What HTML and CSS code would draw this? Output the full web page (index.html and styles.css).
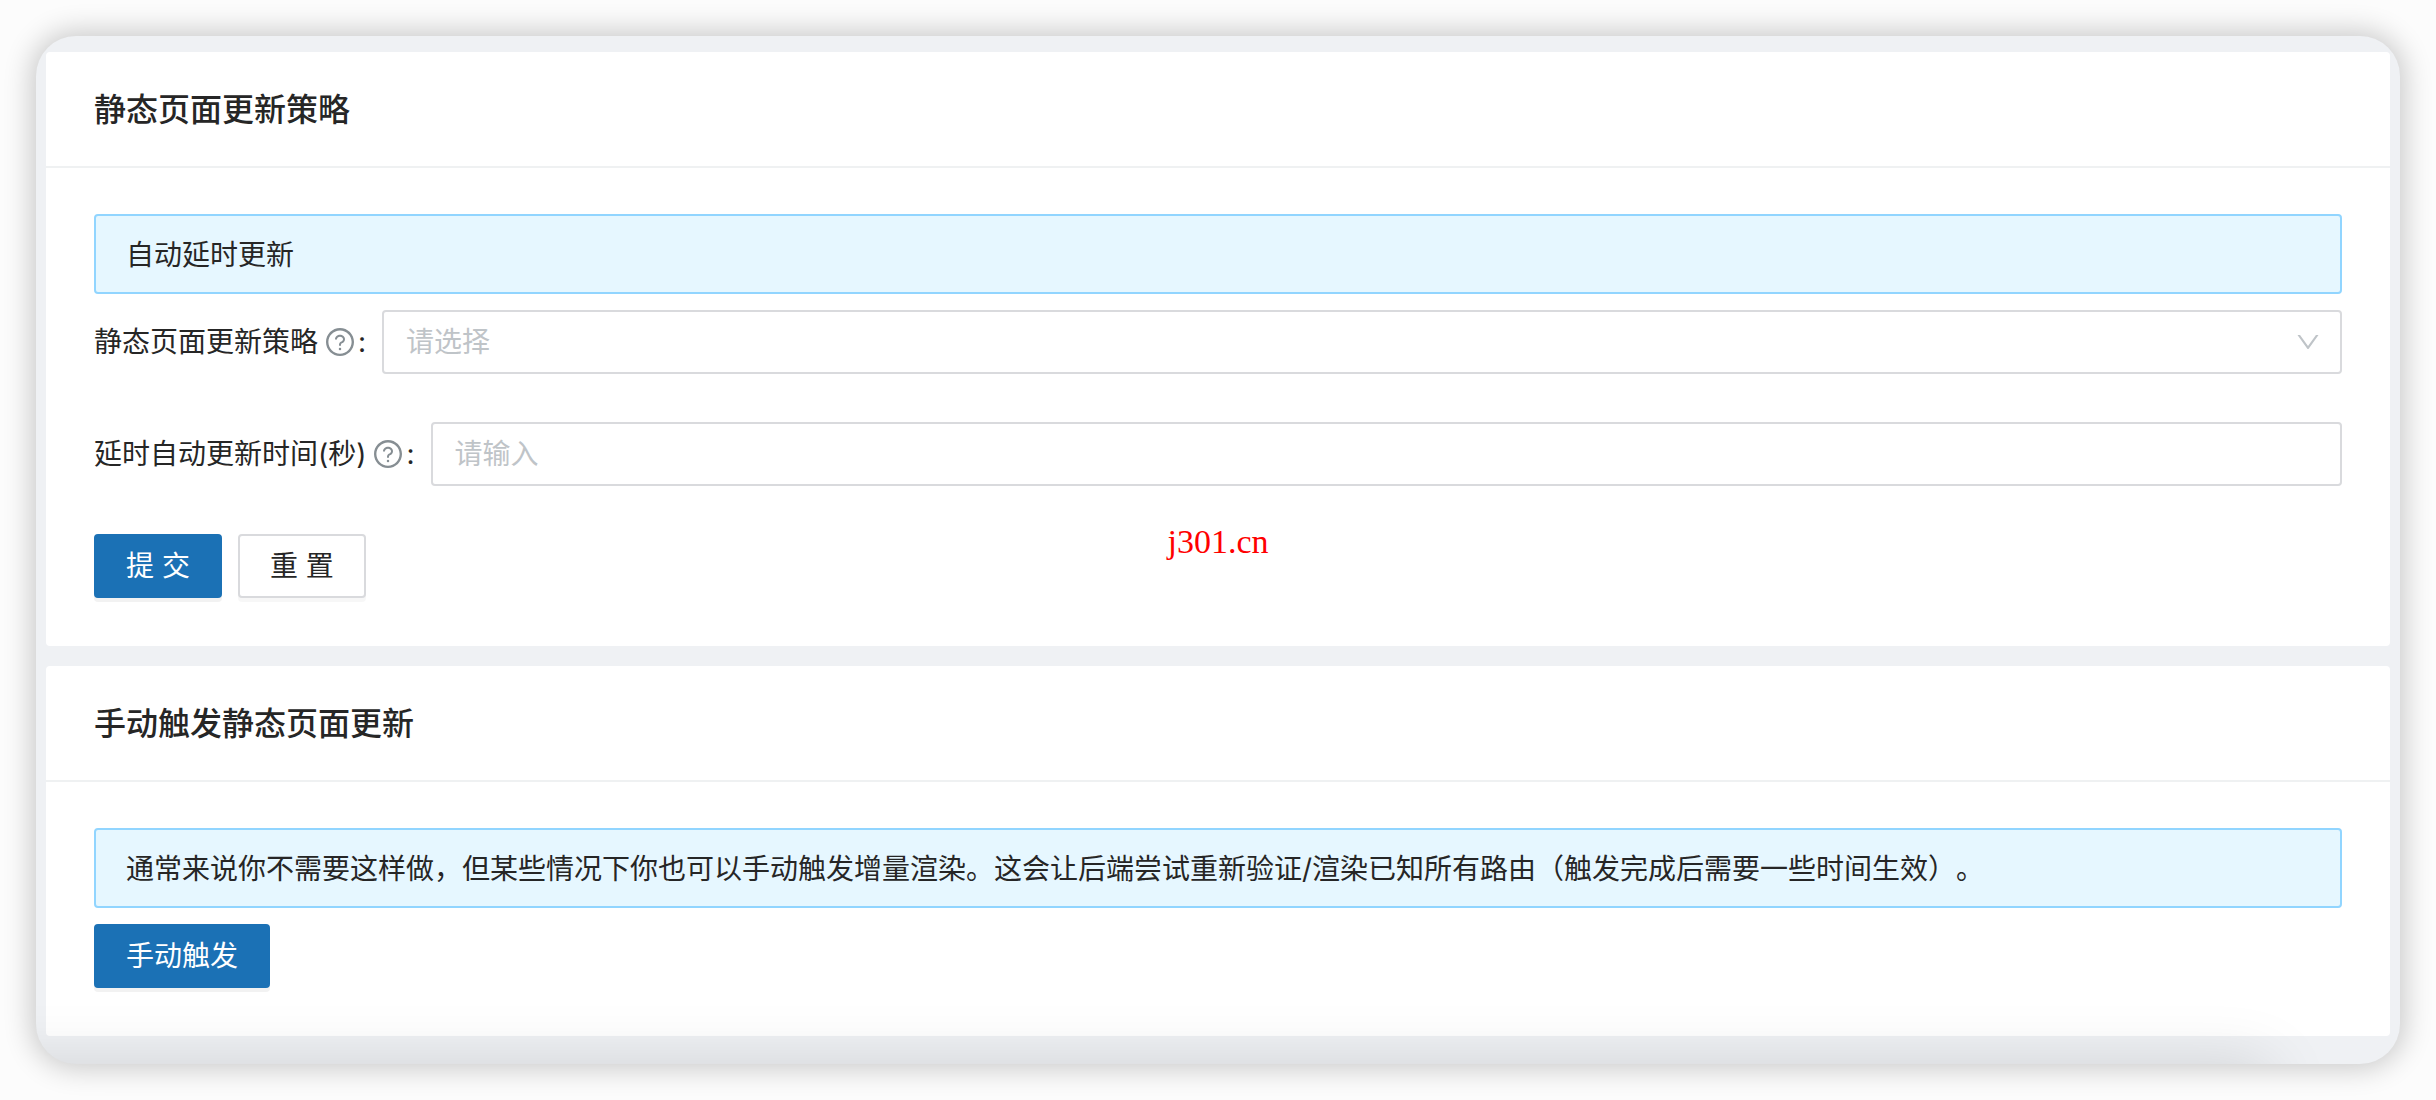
FILE: index.html
```html
<!DOCTYPE html>
<html lang="zh-CN">
<head>
<meta charset="utf-8">
<title>静态页面更新策略</title>
<link rel="stylesheet" href="styles.css">
</head>
<body>
<svg class="sprite" aria-hidden="true">
  <symbol id="icon-question" viewBox="0 0 1024 1024">
    <path d="M512 64C264.6 64 64 264.6 64 512s200.6 448 448 448 448-200.6 448-448S759.4 64 512 64zm0 820c-205.4 0-372-166.6-372-372s166.6-372 372-372 372 166.6 372 372-166.6 372-372 372z"/>
    <path d="M623.6 316.7C593.6 290.4 554 276 512 276s-81.6 14.5-111.6 40.7C369.2 344 352 380.7 352 420v7.6c0 4.4 3.6 8 8 8h48c4.4 0 8-3.6 8-8V420c0-44.1 43.1-80 96-80s96 35.9 96 80c0 31.1-22 59.6-56.1 72.7-21.2 8.1-39.2 22.3-52.1 40.9-13.1 19-19.9 41.8-19.9 64.9V620c0 4.4 3.6 8 8 8h48c4.4 0 8-3.6 8-8v-22.7a48.3 48.3 0 0130.9-44.8c59-22.7 97.1-74.7 97.1-132.5.1-39.3-17.1-76-48.3-103.3zM472 732a40 40 0 1080 0 40 40 0 10-80 0z"/>
  </symbol>
  <symbol id="icon-down" viewBox="0 0 1024 1024">
    <path d="M884 256h-75c-5.1 0-9.9 2.5-12.9 6.6L512 654.2 227.9 262.6c-3-4.1-7.8-6.6-12.9-6.6h-75c-6.5 0-10.3 7.4-6.5 12.7l352.6 486.1c12.8 17.6 39 17.6 51.7 0l352.6-486.1c3.9-5.3.1-12.7-6.4-12.7z"/>
  </symbol>
</svg>
<main class="window">
  <section class="card">
    <h2 class="card-head">静态页面更新策略</h2>
    <div class="card-body">
      <div class="alert">自动延时更新</div>
      <form class="form">
        <div class="form-item">
          <label class="form-label" for="strategy">静态页面更新策略<svg class="help"><use href="#icon-question"/></svg>:</label>
          <div class="select">
            <select class="control placeholder" id="strategy">
              <option value="">请选择</option>
            </select>
            <svg class="select-arrow" aria-hidden="true"><use href="#icon-down"/></svg>
          </div>
        </div>
        <div class="form-item">
          <label class="form-label" for="delay">延时自动更新时间(秒)<svg class="help"><use href="#icon-question"/></svg>:</label>
          <input class="control" id="delay" type="text" placeholder="请输入">
        </div>
        <div class="actions">
          <button class="btn btn-primary" type="button">提 交</button>
          <button class="btn" type="reset">重 置</button>
        </div>
      </form>
    </div>
  </section>
  <section class="card">
    <h2 class="card-head">手动触发静态页面更新</h2>
    <div class="card-body">
      <div class="alert">通常来说你不需要这样做，但某些情况下你也可以手动触发增量渲染。这会让后端尝试重新验证/渲染已知所有路由（触发完成后需要一些时间生效）。</div>
      <button class="btn btn-primary" type="button">手动触发</button>
    </div>
  </section>
</main>
<div class="watermark">j301.cn</div>
</body>
</html>
```

FILE: styles.css
```css
* {
  box-sizing: border-box;
}

body {
  position: relative;
  margin: 0;
  padding: 36px;
  min-height: 100vh;
  background: #fcfcfc;
  color: #262626;
  font-family: Inter, "Noto Sans CJK SC", sans-serif;
  font-size: 28px;
  line-height: 44px;
  text-spacing-trim: space-all;
}

.sprite {
  position: absolute;
  width: 0;
  height: 0;
}

.window {
  position: relative;
  display: flex;
  flex-direction: column;
  gap: 20px;
  padding: 16px 10px 28px;
  overflow: hidden;
  background: #eff1f4;
  border-radius: 40px;
  box-shadow: 0 0 28px 5px rgba(0, 0, 0, 0.2);
}

/* Soft shade rising from the bottom edge of the window */
.window::after {
  content: "";
  position: absolute;
  top: 100%;
  left: -80px;
  right: 130px;
  height: 80px;
  box-shadow: 0 0 64px rgba(0, 0, 0, 0.13);
  pointer-events: none;
}

.card {
  background: #fff;
  border-radius: 4px;
}

.card-head {
  margin: 0 0 -2px;
  padding: 32px 48px 30px;
  border-bottom: 2px solid #eff1f2;
  font-size: 32px;
  font-weight: 500;
  line-height: 52px;
}

.card-body {
  padding: 48px;
}

.alert {
  margin-bottom: 16px;
  padding: 16px 30px 14px;
  border: 2px solid #91d5ff;
  border-radius: 4px;
  background: #e6f7ff;
  line-height: 46px;
}

.form {
  display: flex;
  flex-direction: column;
  gap: 48px;
}

.form-item {
  display: flex;
  align-items: center;
  gap: 16px;
}

.form-label {
  display: flex;
  align-items: center;
  flex: none;
}

.help {
  width: 32px;
  height: 32px;
  margin: 0 2px 0 6px;
  fill: #868e93;
}

.select {
  position: relative;
  display: flex;
  flex: 1;
}

.control {
  flex: 1;
  min-width: 0;
  height: 64px;
  padding: 0 22px;
  border: 2px solid #d9dadd;
  border-radius: 4px;
  background: #fff;
  color: inherit;
  font: inherit;
  appearance: none;
}

.control.placeholder,
.control::placeholder {
  color: #bfc4c8;
}

.select-arrow {
  position: absolute;
  top: 18px;
  right: 20px;
  width: 28px;
  height: 28px;
  fill: #bfc4c8;
  pointer-events: none;
}

.actions {
  display: flex;
  gap: 16px;
}

.btn {
  display: block;
  height: 64px;
  padding: 0 30px;
  border: 2px solid #d9dadd;
  border-radius: 4px;
  background: #fff;
  box-shadow: 0 4px 0 rgba(0, 0, 0, 0.03);
  color: inherit;
  font: inherit;
}

.btn-primary {
  border-color: #1b71b5;
  background: #1b71b5;
  box-shadow: 0 4px 0 rgba(0, 0, 0, 0.05);
  color: #fff;
}

.watermark {
  position: absolute;
  inset: 0;
  display: flex;
  align-items: center;
  justify-content: center;
  padding-bottom: 16px;
  color: #f00;
  font-family: "Liberation Serif", serif;
  font-size: 34px;
  pointer-events: none;
}
```
